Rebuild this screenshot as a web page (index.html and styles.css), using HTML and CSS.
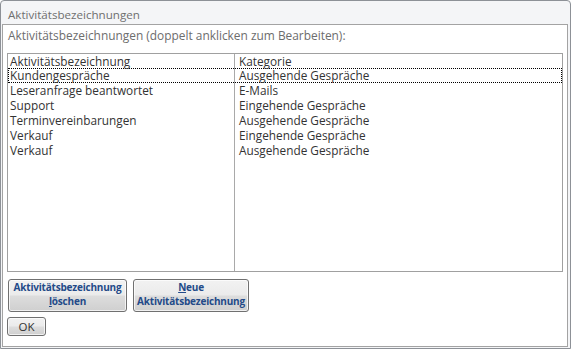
FILE: index.html
```html
<!DOCTYPE html>
<html lang="de">
<head>
<meta charset="utf-8">
<title>Aktivitätsbezeichnungen</title>
<link rel="stylesheet" href="styles.css">
</head>
<body>
<div class="window">
  <div class="titlebar">Aktivitätsbezeichnungen</div>
  <div class="panel">
    <div class="caption">Aktivitätsbezeichnungen (doppelt anklicken zum Bearbeiten):</div>
    <div class="listbox">
      <div class="row header"><span class="c1">Aktivitätsbezeichnung</span><span class="c2">Kategorie</span></div>
      <div class="row focus"><span class="c1">Kundengespräche</span><span class="c2">Ausgehende Gespräche</span></div>
      <div class="row"><span class="c1">Leseranfrage beantwortet</span><span class="c2">E-Mails</span></div>
      <div class="row"><span class="c1">Support</span><span class="c2">Eingehende Gespräche</span></div>
      <div class="row"><span class="c1">Terminvereinbarungen</span><span class="c2">Ausgehende Gespräche</span></div>
      <div class="row"><span class="c1">Verkauf</span><span class="c2">Eingehende Gespräche</span></div>
      <div class="row"><span class="c1">Verkauf</span><span class="c2">Ausgehende Gespräche</span></div>
    </div>
    <div class="buttons">
      <button class="btn big b1">Aktivitätsbezeichnung<br><u>l</u>öschen</button>
      <button class="btn big b2"><u>N</u>eue<br>Aktivitätsbezeichnung</button>
    </div>
    <div class="okrow">
      <button class="btn ok">OK</button>
    </div>
  </div>
</div>
</body>
</html>
```
FILE: styles.css
```css
html, body {
  margin: 0;
  padding: 0;
  background: #ffffff;
}
body {
  width: 571px;
  height: 349px;
  font-family: "Open Sans", "Noto Sans", sans-serif;
}
.window {
  box-sizing: border-box;
  width: 571px;
  height: 349px;
  border: 1px solid #8d9197;
  border-radius: 4px 4px 0 0;
  background: #f4f5f7;
  display: flex;
  flex-direction: column;
}
.titlebar {
  box-sizing: border-box;
  height: 23px;
  padding: 6px 0 0 7px;
  font-size: 11.6px;
  line-height: 16px;
  color: #6f6f6f;
}
.panel {
  box-sizing: border-box;
  height: 323px;
  margin: 0 2px 1px 1px;
  border: 1px solid #a3a3a3;
  background: #ffffff;
  display: flex;
  flex-direction: column;
}
.caption {
  padding: 2px 0 0 5px;
  margin-bottom: 10px;
  font-size: 11.9px;
  line-height: 16px;
  color: #6d6d6d;
}
.listbox {
  box-sizing: border-box;
  margin-left: 4px;
  width: 556px;
  height: 219px;
  border: 1px solid #a0a0a0;
  background:
    linear-gradient(to right, transparent 226px, #a9a9a9 226px, #a9a9a9 227px, transparent 227px);
  font-size: 11.8px;
  color: #333333;
}
.row {
  box-sizing: border-box;
  height: 15px;
  padding: 1px 0;
  line-height: 13px;
  display: flex;
  white-space: nowrap;
}
.row.header {
  height: 14px;
  padding: 0;
  line-height: 14px;
}
.row.focus {
  border: 1px dotted #000000;
  padding: 0;
}
.c1 {
  width: 226px;
  padding-left: 2px;
  box-sizing: border-box;
}
.row.focus .c1 {
  width: 225px;
  padding-left: 1px;
}
.c2 {
  padding-left: 5px;
}
.buttons {
  display: flex;
  gap: 6px;
  margin: 7px 0 0 5px;
}
.btn {
  box-sizing: border-box;
  margin: 0;
  padding: 0;
  border: 1px solid #707070;
  border-radius: 3px;
  background: linear-gradient(to bottom, #f2f2f2 0%, #ebebeb 48%, #dddddd 52%, #cfcfcf 100%);
  box-shadow: inset 0 0 0 1px rgba(255, 255, 255, 0.7);
  font-family: "Open Sans", "Noto Sans", sans-serif;
  cursor: default;
}
.btn.big {
  height: 33px;
  padding-bottom: 3px;
  font-size: 10px;
  font-weight: bold;
  letter-spacing: -0.2px;
  line-height: 14px;
  color: #234a88;
  text-align: center;
}
.b1 { width: 119px; }
.b2 { width: 116px; }
.okrow {
  margin: 5px 0 0 4px;
  display: flex;
}
.btn.ok {
  width: 39px;
  height: 19px;
  font-size: 11.5px;
  line-height: 15px;
  color: #333333;
}
u {
  text-decoration: underline;
  text-underline-offset: 1px;
}
```
